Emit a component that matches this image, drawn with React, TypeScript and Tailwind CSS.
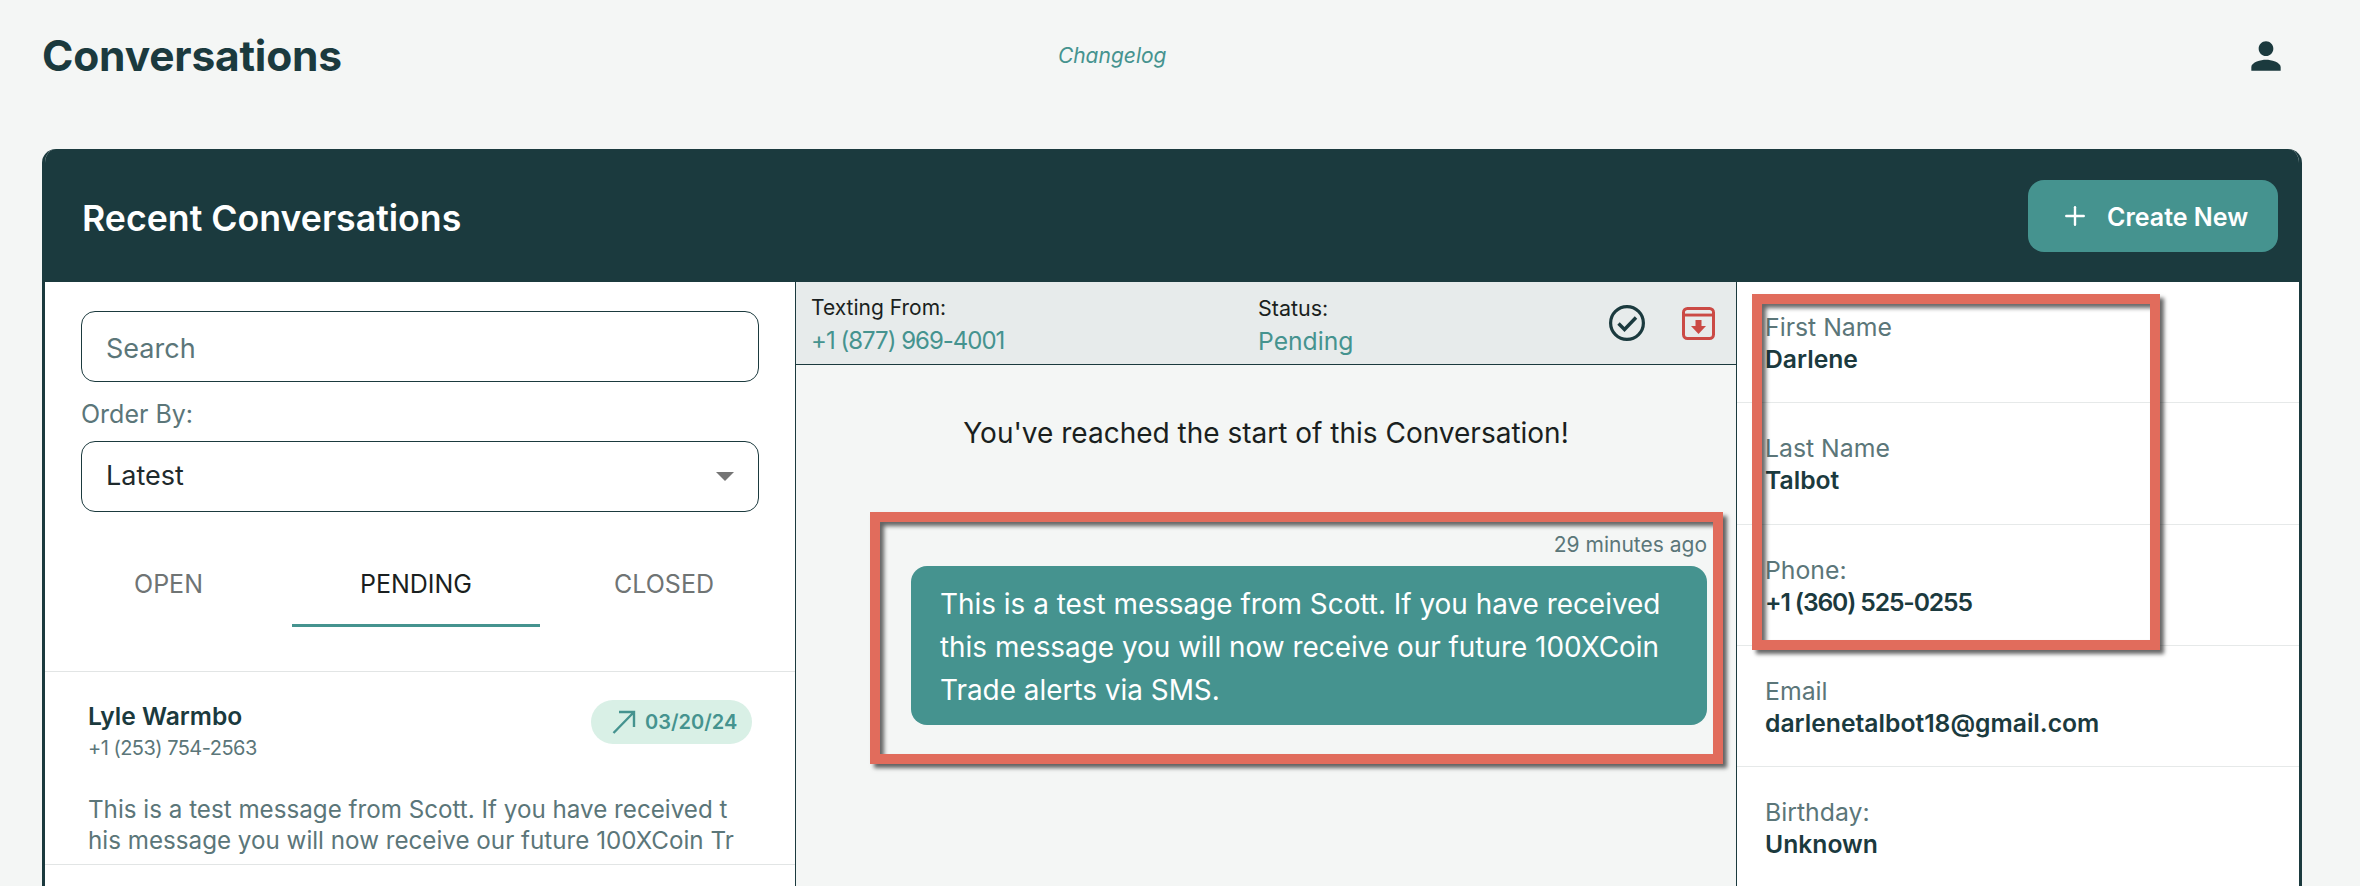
import { Plus } from 'lucide-react';

const details = [
  { label: 'First Name', value: 'Darlene' },
  { label: 'Last Name', value: 'Talbot' },
  { label: 'Phone:', value: '+1 (360) 525-0255', narrow: true },
  { label: 'Email', value: 'darlenetalbot18@gmail.com' },
  { label: 'Birthday:', value: 'Unknown' },
];

// red annotation frame drawn over the screenshot
const frame =
  'pointer-events-none absolute border-[10px] border-[#e16c5c] shadow-[4px_4px_4px_rgba(0,0,0,0.6),inset_4px_4px_4px_rgba(0,0,0,0.6)]';

export default function App() {
  return (
    <div className="h-[886px] overflow-hidden bg-[#f4f6f5] pl-[42px] pr-[58px] font-['Inter',sans-serif] text-[#1b3a3e]">
      {/* top bar */}
      <div className="flex h-[149px] items-start pt-[32px]">
        <h1 className="text-[42.5px] leading-[48px] font-bold tracking-[-0.2px]">Conversations</h1>
        <a className="ml-[716px] mt-[12px] text-[21px] leading-[24px] italic text-[#45938f]">Changelog</a>
        <svg viewBox="0 0 24 24" className="ml-auto mr-[14px] mt-[2px] size-[44px]" fill="currentColor">
          <path d="M12 12c2.21 0 4-1.79 4-4s-1.79-4-4-4-4 1.79-4 4 1.79 4 4 4zm0 2c-2.67 0-8 1.34-8 4v2h16v-2c0-2.66-5.33-4-8-4z" />
        </svg>
      </div>

      {/* card */}
      <div className="h-[737px] overflow-hidden rounded-t-[14px] border-x-[3px] border-[#1b3a3e] bg-white">
        <div className="flex h-[133px] items-center justify-between bg-[#1b3a3e] pl-[37px] pr-[21px]">
          <h2 className="pt-[6px] text-[35.7px] font-semibold text-white">Recent Conversations</h2>
          <button className="flex h-[72px] w-[250px] items-center rounded-[16px] bg-[#45938f] pl-[32px] text-[25px] font-semibold text-white">
            <Plus className="size-[30px]" strokeWidth={1.9} />
            <span className="ml-[17px] pt-[4px]">Create New</span>
          </button>
        </div>

        <div className="flex h-[604px]">
          {/* conversation list */}
          <div className="w-[751px] shrink-0 border-r border-[#1b3a3e]">
            <div className="px-[36px] pt-[29px]">
              <div className="flex h-[71px] items-center rounded-[14px] border border-[#1b3a3e] px-[24px] pt-[5px] text-[27px] text-[#5b7679]">
                Search
              </div>
              <div className="mt-[16px] mb-[11px] text-[25px] leading-[32px] text-[#5b7679]">Order By:</div>
              <div className="flex h-[71px] items-center justify-between rounded-[14px] border border-[#1b3a3e] pl-[24px] pr-[24px] text-[27px] text-[#1f2a2c]">
                Latest
                <span className="h-0 w-0 border-x-[9px] border-t-[9px] border-x-transparent border-t-[#757575]" />
              </div>
            </div>

            <div className="mt-[29px] grid h-[86px] grid-cols-[247px_248px_248px] text-center text-[25px]">
              <div className="pt-[26px] leading-[34px] text-[#6f7474]">OPEN</div>
              <div className="border-b-[3px] border-[#45938f] pt-[26px] leading-[34px] text-[#1a1f20]">PENDING</div>
              <div className="pt-[26px] leading-[34px] text-[#6f7474]">CLOSED</div>
            </div>

            <div className="mt-[44px] h-[194px] border-y border-[#e2e5e5] pl-[43px] pr-[43px] pt-[28px]">
              <div className="flex items-start justify-between">
                <div>
                  <div className="mt-[1px] text-[24.6px] leading-[30px] font-semibold">Lyle Warmbo</div>
                  <div className="mt-[3px] text-[20px] leading-[28px] tracking-[-0.53px] text-[#5b7679]">+1 (253) 754-2563</div>
                </div>
                <div className="flex h-[44px] w-[161px] items-center rounded-full bg-[#d9f0e6] pl-[21px] text-[20px] font-semibold text-[#45938f]">
                  <svg viewBox="0 0 24 24" className="size-[24px] shrink-0" fill="none" stroke="currentColor" strokeWidth="2.4">
                    <path d="M1.5 23L22 2M7 2h15v15" />
                  </svg>
                  <span className="ml-[9px]">03/20/24</span>
                </div>
              </div>
              <div className="mt-[32px] text-[24.2px] leading-[32px] whitespace-nowrap text-[#5b7679]">
                <div>This is a test message from Scott. If you have received t</div>
                <div className="-mt-[1px]">his message you will now receive our future 100XCoin Tr</div>
              </div>
            </div>
          </div>

          {/* message thread */}
          <div className="relative w-[941px] shrink-0 border-r border-[#1b3a3e] bg-[#f4f6f5]">
            <div className="flex h-[83px] items-center border-b border-[#1b3a3e] bg-[#e7ebeb] pl-[15px]">
              <div className="w-[447px]">
                <div className="pt-[4px] text-[21px] leading-[28px] text-[#1a1f20]">Texting From:</div>
                <div className="mt-[3px] text-[24px] leading-[32px] tracking-[-1px] text-[#45938f]">+1 (877) 969-4001</div>
              </div>
              <div>
                <div className="pt-[4px] text-[21.5px] leading-[28px] text-[#1a1f20]">Status:</div>
                <div className="mt-[3px] text-[24.7px] leading-[32px] text-[#45938f]">Pending</div>
              </div>
              <svg viewBox="0 0 36 36" className="ml-auto size-[36px]" fill="none" stroke="#1b3a3e" strokeWidth="3.2">
                <circle cx="18" cy="18" r="16.4" />
                <path d="M9.5 18.5l6 6 11.5-12" strokeWidth="3.4" />
              </svg>
              <svg viewBox="0 0 33 33" className="ml-[37px] mr-[21px] size-[33px]" fill="none" stroke="#cb4a45" strokeWidth="3">
                <rect x="1.5" y="1.5" width="30" height="30" rx="4" />
                <path d="M1.5 8h30" />
                <path d="M3 4.6h27v1.6H3z" fill="#e7ebeb" stroke="none" />
                <path d="M13.5 13h6v6h4.5l-7.5 8-7.5-8h4.5z" fill="#cb4a45" stroke="none" />
              </svg>
            </div>

            <div className="mt-[50px] text-center text-[28px] leading-[36px] text-[#1a1f20]">
              You've reached the start of this Conversation!
            </div>

            <div className="mt-[80px] pl-[115px] pr-[29px]">
              <div className="text-right text-[21px] leading-[28px] text-[#5b7679]">29 minutes ago</div>
              <div className="mt-[7px] h-[159px] rounded-[16px] bg-[#45938f] pl-[29px] pt-[17px] text-[27.9px] leading-[43px] text-white">
                This is a test message from Scott. If you have received
                <br />
                this message you will now receive our future 100XCoin
                <br />
                Trade alerts via SMS.
              </div>
            </div>

            <div className={`${frame} left-[74px] top-[230px] h-[252px] w-[853px]`} />
          </div>

          {/* contact details */}
          <div className="relative flex-1 bg-white">
            {details.map((d) => (
              <div key={d.label} className="h-[121.25px] border-b border-[#e6e9e9] pl-[28px] pt-[30px]">
                <div className="text-[24.8px] leading-[30px] text-[#5b7679]">{d.label}</div>
                <div className={`mt-[1px] text-[24.7px] leading-[32px] font-semibold ${d.narrow ? 'tracking-[-1.15px]' : ''}`}>
                  {d.value}
                </div>
              </div>
            ))}
            <div className={`${frame} left-[15px] top-[12px] h-[356px] w-[408px]`} />
          </div>
        </div>
      </div>
    </div>
  );
}
